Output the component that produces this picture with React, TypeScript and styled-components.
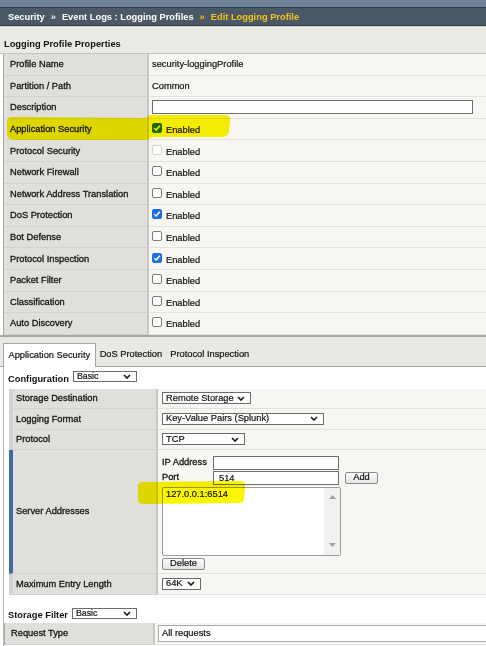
import React from 'react';
import styled, { createGlobalStyle } from 'styled-components';

const GlobalStyle = createGlobalStyle`
  html, body { margin: 0; padding: 0; }
  body {
    width: 486px; height: 646px; overflow: hidden; background: #fff;
    font-family: "Liberation Sans", Arial, sans-serif; font-size: 9.3px; color: #111;
    -webkit-text-stroke: 0.2px #111;
  }
`;

const Page = styled.div`
  position: relative; width: 486px; height: 646px; overflow: hidden;
  background: #fff; display: flex; flex-direction: column;
`;

const TopStrip = styled.div`
  height: 7px; background: #6f8398; flex: none;
`;

const Breadcrumb = styled.div`
  flex: none; height: 17px; background: #4b5866;
  border-top: 1px solid #333f4b; border-bottom: 1px solid #333f4b;
  display: flex; align-items: center; padding-left: 8px;
  font-weight: 700; color: #fff; white-space: nowrap;
  -webkit-text-stroke: 0;
`;

const Crumb = styled.span<{ $current?: boolean }>`
  color: ${p => (p.$current ? '#f2c41e' : '#ffffff')};
`;

const Sep = styled.span<{ $current?: boolean }>`
  margin: 0 6px; color: ${p => (p.$current ? '#f2c41e' : '#e8e8e8')};
`;

const HeaderBand = styled.div`
  flex: none; height: 28px; background: #ebeae6; box-sizing: border-box;
  border-top: 1px solid #d2d2d0; border-bottom: 1px solid #c5c4c0;
  display: flex; align-items: flex-end; padding: 0 0 3px 4px;
`;

const Heading = styled.div`
  font-weight: 700; line-height: 11px; -webkit-text-stroke: 0;
`;

const Table = styled.div<{ $left: number; $border?: string }>`
  margin-left: ${p => p.$left}px; display: flex; flex-direction: column;
  border-left: 1px solid ${p => p.$border || '#a9a9a9'};
`;

const Row = styled.div<{ $h: number; $label: number }>`
  display: grid; grid-template-columns: ${p => p.$label}px 1fr; height: ${p => p.$h}px;
`;

const Label = styled.div<{ $pad: number; $mark?: string }>`
  box-sizing: border-box; background: #e0dfdb;
  border-right: 2px solid #c8c7c3; border-bottom: 1px solid #d3d2ce;
  ${p => (p.$mark ? `border-left: 4px solid ${p.$mark};` : '')}
  display: flex; align-items: center; padding-left: ${p => p.$pad}px;
  white-space: nowrap; color: #141414; -webkit-text-stroke: 0.3px #141414;
`;

const Value = styled.div<{ $pad: number; $top?: boolean }>`
  box-sizing: border-box; background: #f7f6f3; border-bottom: 1px solid #e2e1de;
  display: flex; align-items: ${p => (p.$top ? 'flex-start' : 'center')};
  flex-direction: ${p => (p.$top ? 'column' : 'row')};
  padding-left: ${p => p.$pad}px; white-space: nowrap;
`;

const TopTableEnd = styled.div`
  height: 2px; background: #a9a9a9; flex: none;
`;

const CheckBox = styled.span<{ $checked?: boolean; $disabled?: boolean }>`
  box-sizing: border-box; width: 10px; height: 10px; border-radius: 2px; flex: none;
  border: 1px solid ${p => (p.$checked ? '#1f6fe0' : p.$disabled ? '#d4d4d4' : '#7a7a7a')};
  background: ${p => (p.$checked ? '#1f6fe0' : '#fff')};
  display: inline-flex; align-items: center; justify-content: center;
  margin: 0 4px 2px 0;
`;

const CheckText = styled.span`
  padding-top: 2px;
`;

const TextBox = styled.span<{ $w: number; $h?: number }>`
  box-sizing: border-box; display: inline-flex; align-items: center;
  width: ${p => p.$w}px; height: ${p => p.$h || 14}px;
  border: 1px solid #6e6e6e; background: #fff; padding-left: 5px;
`;

const SelectBox = styled.span<{ $w: number; $small?: boolean }>`
  box-sizing: border-box; display: inline-flex; align-items: center; justify-content: space-between;
  width: ${p => p.$w}px; height: ${p => (p.$small ? 11 : 12)}px;
  border: 1px solid #6c6c6c; background: #fff;
  padding: 0 5px 0 3px; font-size: ${p => (p.$small ? 8.8 : 9.3)}px; line-height: 1;
`;

const TabBand = styled.div`
  flex: none; height: 30px; box-sizing: border-box; background: #e9e8e4;
  padding: 6px 0 0 3px; display: flex; align-items: flex-end;
  border-bottom: 1px solid #a6a6a6;
`;

const Tab = styled.div<{ $active?: boolean }>`
  box-sizing: border-box; height: ${p => (p.$active ? 24 : 23)}px;
  display: flex; align-items: center; white-space: nowrap;
  padding: 0 ${p => (p.$active ? 4.5 : 4)}px;
  ${p =>
    p.$active
      ? 'background:#fff; border:1px solid #a6a6a6; border-bottom:none; margin-bottom:-1px; padding-bottom:1px;'
      : ''}
`;

const Panel = styled.div`
  flex: 1; margin-left: 3px; border-left: 1px solid #b9b9b9; background: #fff;
  display: flex; flex-direction: column;
`;

const OptionRow = styled.div<{ $h: number; $pt: number }>`
  flex: none; height: ${p => p.$h}px; box-sizing: border-box;
  display: flex; align-items: flex-start; padding: ${p => p.$pt}px 0 0 4px;
`;

const OptionLabel = styled.span<{ $mt: number }>`
  font-weight: 700; line-height: 11px; margin: ${p => p.$mt}px 4px 0 0;
  -webkit-text-stroke: 0;
`;

const AddrGrid = styled.div`
  display: grid; grid-template-columns: 51px auto auto; row-gap: 1px;
  align-items: center; margin-top: 6px;
`;

const AddrLabel = styled.span`
  line-height: 11px; -webkit-text-stroke: 0.3px #111;
`;

const Button = styled.span<{ $w: number }>`
  box-sizing: border-box; display: inline-flex; align-items: center; justify-content: center;
  width: ${p => p.$w}px; height: 12px; border: 1px solid #8a8a8a; border-radius: 2px;
  background: linear-gradient(#fbfbfb, #e4e4e4); line-height: 1;
`;

const AddButton = styled(Button)`
  margin-left: 6px;
`;

const ListBox = styled.div`
  box-sizing: border-box; width: 179px; height: 69px; margin-top: 2px;
  border: 1px solid #9c9c9c; border-radius: 2px; background: #fff;
  display: flex;
`;

const ListItems = styled.div`
  flex: 1; padding: 1px 0 0 3px; line-height: 11px;
`;

const ScrollTrack = styled.div`
  width: 16px; background: #f1f1f1; display: flex; flex-direction: column;
  justify-content: space-between; align-items: center; padding: 7px 0 8px;
  box-sizing: border-box;
`;

const DeleteButton = styled(Button)`
  margin-top: 2px;
`;

const WideBox = styled.span`
  box-sizing: border-box; display: flex; align-items: center; flex: 1;
  height: 17px; border: 1px solid #a8a8a8; border-right: none;
  background: #fff; padding-left: 3px;
`;

const Highlights = styled.svg`
  position: absolute; left: 0; top: 0; width: 486px; height: 646px;
  pointer-events: none; mix-blend-mode: multiply;
`;

const Chevron = () => (
  <svg width="8" height="5" viewBox="0 0 8 5">
    <path d="M1 1 L4 4 L7 1" stroke="#1e1e1e" strokeWidth="1.7" fill="none" />
  </svg>
);

const Tick = () => (
  <svg width="8" height="8" viewBox="0 0 8 8">
    <path d="M1.3 4.2 L3.2 6 L6.8 1.8" stroke="#fff" strokeWidth="1.5" fill="none" />
  </svg>
);

const Arrow = ({ up }: { up?: boolean }) => (
  <svg width="7" height="4" viewBox="0 0 7 4">
    <path d={up ? 'M0 4 L3.5 0 L7 4 Z' : 'M0 0 L3.5 4 L7 0 Z'} fill="#a3a3a3" />
  </svg>
);

const Select = ({ w, children, small }: { w: number; children: React.ReactNode; small?: boolean }) => (
  <SelectBox $w={w} $small={small}>
    <span>{children}</span>
    <Chevron />
  </SelectBox>
);

type Prop = { label: string; checked?: boolean; disabled?: boolean };

const modules: Prop[] = [
  { label: 'Application Security', checked: true },
  { label: 'Protocol Security', disabled: true },
  { label: 'Network Firewall' },
  { label: 'Network Address Translation' },
  { label: 'DoS Protection', checked: true },
  { label: 'Bot Defense' },
  { label: 'Protocol Inspection', checked: true },
  { label: 'Packet Filter' },
  { label: 'Classification' },
  { label: 'Auto Discovery' },
];

const RH = 21.6;

export default function App() {
  return (
    <Page>
      <GlobalStyle />
      <TopStrip />
      <Breadcrumb>
        <Crumb>Security</Crumb>
        <Sep>»</Sep>
        <Crumb>Event Logs : Logging Profiles</Crumb>
        <Sep $current>»</Sep>
        <Crumb $current>Edit Logging Profile</Crumb>
      </Breadcrumb>
      <HeaderBand>
        <Heading>Logging Profile Properties</Heading>
      </HeaderBand>

      <Table $left={3}>
        <Row $h={RH} $label={145}>
          <Label $pad={6}>Profile Name</Label>
          <Value $pad={3}>security-loggingProfile</Value>
        </Row>
        <Row $h={RH} $label={145}>
          <Label $pad={6}>Partition / Path</Label>
          <Value $pad={3}>Common</Value>
        </Row>
        <Row $h={RH} $label={145}>
          <Label $pad={6}>Description</Label>
          <Value $pad={3}>
            <TextBox $w={321} />
          </Value>
        </Row>
        {modules.map(m => (
          <Row key={m.label} $h={RH} $label={145}>
            <Label $pad={6}>{m.label}</Label>
            <Value $pad={3}>
              <CheckBox $checked={m.checked} $disabled={m.disabled}>
                {m.checked && <Tick />}
              </CheckBox>
              <CheckText>Enabled</CheckText>
            </Value>
          </Row>
        ))}
      </Table>
      <TopTableEnd />

      <TabBand>
        <Tab $active>Application Security</Tab>
        <Tab>DoS Protection</Tab>
        <Tab>Protocol Inspection</Tab>
      </TabBand>

      <Panel>
        <OptionRow $h={22} $pt={4}>
          <OptionLabel $mt={3}>Configuration</OptionLabel>
          <Select w={64} small>Basic</Select>
        </OptionRow>

        <Table $left={4} $border="transparent">
          <Row $h={20} $label={149}>
            <Label $pad={3} $mark="#d3d2ce">Storage Destination</Label>
            <Value $pad={4}>
              <Select w={89}>Remote Storage</Select>
            </Value>
          </Row>
          <Row $h={21} $label={149}>
            <Label $pad={3} $mark="#d3d2ce">Logging Format</Label>
            <Value $pad={4}>
              <Select w={162}>Key-Value Pairs (Splunk)</Select>
            </Value>
          </Row>
          <Row $h={20} $label={149}>
            <Label $pad={3} $mark="#d3d2ce">Protocol</Label>
            <Value $pad={4}>
              <Select w={83}>TCP</Select>
            </Value>
          </Row>
          <Row $h={124} $label={149}>
            <Label $pad={3} $mark="#3d6c9e">Server Addresses</Label>
            <Value $pad={4} $top>
              <AddrGrid>
                <AddrLabel>IP Address</AddrLabel>
                <TextBox $w={126} />
                <span />
                <AddrLabel>Port</AddrLabel>
                <TextBox $w={126}>514</TextBox>
                <AddButton $w={33}>Add</AddButton>
              </AddrGrid>
              <ListBox>
                <ListItems>127.0.0.1:6514</ListItems>
                <ScrollTrack>
                  <Arrow up />
                  <Arrow />
                </ScrollTrack>
              </ListBox>
              <DeleteButton $w={43}>Delete</DeleteButton>
            </Value>
          </Row>
          <Row $h={21} $label={149}>
            <Label $pad={3} $mark="#d3d2ce">Maximum Entry Length</Label>
            <Value $pad={4}>
              <Select w={39}>64K</Select>
            </Value>
          </Row>
        </Table>

        <OptionRow $h={28} $pt={13}>
          <OptionLabel $mt={2}>Storage Filter</OptionLabel>
          <Select w={65} small>Basic</Select>
        </OptionRow>

        <Table $left={0} $border="#a9a9a9">
          <Row $h={22} $label={150}>
            <Label $pad={6}>Request Type</Label>
            <Value $pad={3}>
              <WideBox>All requests</WideBox>
            </Value>
          </Row>
        </Table>
      </Panel>

      <Highlights viewBox="0 0 486 646">
        <path
          d="M7 121 Q7 117 13 117 L146 118 L150 115 L225 115 Q231 115 230 121 L229 132 Q228 137 221 137 L152 137 L147 140 L15 140 Q7 140 7 133 Z"
          fill="#fcf500"
        />
        <path
          d="M138 486 Q138 482 143 482 L240 481 Q245 481 245 486 L244 499 Q244 503 239 503 L143 504 Q138 504 138 499 Z"
          fill="#fcf500"
        />
      </Highlights>
    </Page>
  );
}
